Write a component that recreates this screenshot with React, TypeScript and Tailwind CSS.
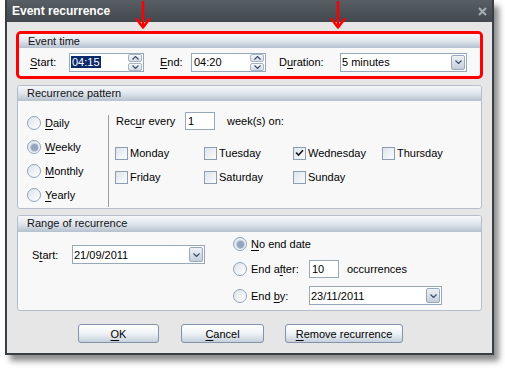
import React from "react"

function U({ children }: { children: React.ReactNode }) {
  return <span className="underline decoration-1 underline-offset-[2px]">{children}</span>
}

function Chevron({ up = false }: { up?: boolean }) {
  return (
    <svg width="7" height="4" viewBox="0 0 7 4" className="block">
      <path d={up ? "M0.5 3.5 L3.5 0.5 L6.5 3.5" : "M0.5 0.5 L3.5 3.5 L6.5 0.5"} fill="none" stroke="#3d4f6e" strokeWidth="1.2" />
    </svg>
  )
}

function SpinBox({ value, selected = false }: { value: string; selected?: boolean }) {
  return (
    <div className="flex h-[19px] w-[75px] items-center border border-[#97a8bb] bg-white">
      <div className="flex-1 pl-px">
        {selected ? (
          <span className="bg-[#0b2a6b] px-px text-white">{value}</span>
        ) : (
          <span className="pl-px">{value}</span>
        )}
      </div>
      <div className="mr-px flex flex-col gap-px">
        <div className="flex h-[8px] w-[14px] items-center justify-center rounded-[2px] border border-[#a7b4c4] bg-gradient-to-b from-[#f6f8fa] to-[#d3dbe5]">
          <Chevron up />
        </div>
        <div className="flex h-[8px] w-[14px] items-center justify-center rounded-[2px] border border-[#a7b4c4] bg-gradient-to-b from-[#f6f8fa] to-[#d3dbe5]">
          <Chevron />
        </div>
      </div>
    </div>
  )
}

function Combo({ value, className }: { value: string; className: string }) {
  return (
    <div className={`flex h-[19px] items-center border border-[#97a8bb] bg-white pl-px ${className}`}>
      <span className="flex-1">{value}</span>
      <div className="mr-px flex h-[15px] w-[14px] items-center justify-center rounded-[2px] border border-[#98a9bd] bg-gradient-to-b from-[#eef2f6] to-[#c3cedb]">
        <Chevron />
      </div>
    </div>
  )
}

function TextBox({ value }: { value: string }) {
  return (
    <div className="flex h-[18px] w-[30px] items-center border border-[#97a8bb] bg-white pl-[2px]">{value}</div>
  )
}

function Radio({ checked = false, children }: { checked?: boolean; children: React.ReactNode }) {
  return (
    <div className="flex items-center">
      <div className="flex h-[14px] w-[14px] items-center justify-center rounded-full border border-[#8fa2b8] bg-gradient-to-br from-[#dde3ea] to-white">
        {checked && <div className="h-[7px] w-[7px] rounded-full bg-[#94a6bd] ring-1 ring-[#c3cedb]" />}
      </div>
      <div className="ml-[4px]">{children}</div>
    </div>
  )
}

function Check({ checked = false, children }: { checked?: boolean; children: React.ReactNode }) {
  return (
    <div className="flex h-[24px] items-center">
      <div className="flex h-[13px] w-[13px] items-center justify-center border border-[#8c9db2] bg-gradient-to-br from-[#dfe5ec] to-[#fbfcfd]">
        {checked && (
          <svg width="9" height="8" viewBox="0 0 9 8">
            <path d="M1 3.5 L3.5 6 L8 1.2" fill="none" stroke="#1a1a1a" strokeWidth="1.6" />
          </svg>
        )}
      </div>
      <span className="ml-[2px]">{children}</span>
    </div>
  )
}

function Header({ title, h = "h-[15px]" }: { title: string; h?: string }) {
  return (
    <div className={`${h} rounded-t-[2px] bg-gradient-to-b from-[#f5f7fa] via-[#dfe5ec] to-[#b6c1cf] pl-[9px] leading-[15px] text-[#111]`}>
      {title}
    </div>
  )
}

function Button({ width, children }: { width: string; children: React.ReactNode }) {
  return (
    <div className={`flex h-[19px] ${width} items-center justify-center rounded-[3px] border border-[#8193a9] bg-gradient-to-b from-white via-[#eef2f6] to-[#c6d0dc]`}>
      {children}
    </div>
  )
}

export default function App() {
  return (
    <div className="relative h-[371px] w-[505px] overflow-hidden bg-white font-['Liberation_Sans',Arial,sans-serif] text-[11px] leading-[14px] text-black">
      <div className="ml-[5px] flex h-[355px] w-[489px] flex-col border-2 border-t-0 border-[#394045] shadow-[5px_6px_6px_rgba(0,0,0,0.45)]">
        {/* title bar */}
        <div className="flex h-[22px] items-center justify-between bg-gradient-to-b from-[#585f64] to-[#42484d] pl-[5px] pr-[5px]">
          <span className="text-[12px] font-bold text-white">Event recurrence</span>
          <svg width="9" height="9" viewBox="0 0 9 9" className="mt-[1px]">
            <path d="M1 1 L8 8 M8 1 L1 8" stroke="#a4abb1" strokeWidth="2.2" />
          </svg>
        </div>

        <div className="flex flex-1 flex-col bg-[#e6e6e6] px-[10px] pt-[9px]">
          {/* Event time */}
          <div className="-mx-px h-[48px] rounded-[5px] border-[3px] border-[#ff0000] bg-[#f8f8f8]">
            <Header title="Event time" h="h-[14px]" />
            <div className="flex h-[28px] items-center pl-[11px]">
              <span className="w-[39px]"><U>S</U>tart:</span>
              <SpinBox value="04:15" selected />
              <span className="ml-[16px] w-[31px]"><U>E</U>nd:</span>
              <SpinBox value="04:20" />
              <span className="ml-[13px] w-[61px]">D<U>u</U>ration:</span>
              <Combo value="5 minutes" className="w-[127px]" />
            </div>
          </div>

          {/* Recurrence pattern */}
          <div className="mt-[6px] flex h-[124px] flex-col rounded-[3px] border border-[#b3bfcd] bg-[#f8f8f8]">
            <Header title="Recurrence pattern" />
            <div className="flex flex-1">
              <div className="flex w-[90px] flex-col pl-[9px] pt-[10px]">
                {[
                  [<><U>D</U>aily</>, false],
                  [<><U>W</U>eekly</>, true],
                  [<><U>M</U>onthly</>, false],
                  [<><U>Y</U>early</>, false],
                ].map(([label, on], i) => (
                  <div key={i} className="flex h-[24px] items-center">
                    <Radio checked={on as boolean}>{label as React.ReactNode}</Radio>
                  </div>
                ))}
              </div>
              <div className="mb-px mt-[14px] w-px bg-[#9c9c9c]" />
              <div className="flex flex-col pl-[6px] pt-[11px]">
                <div className="flex h-[18px] items-center">
                  <span className="ml-px w-[69px]">Rec<U>u</U>r every</span>
                  <TextBox value="1" />
                  <span className="ml-[12px]">week(s) on:</span>
                </div>
                <div className="mt-[11px] grid grid-cols-[89px_89px_89px_89px]">
                  <Check>Monday</Check>
                  <Check>Tuesday</Check>
                  <Check checked>Wednesday</Check>
                  <Check>Thursday</Check>
                  <Check>Friday</Check>
                  <Check>Saturday</Check>
                  <Check>Sunday</Check>
                </div>
              </div>
            </div>
          </div>

          {/* Range of recurrence */}
          <div className="mt-[6px] flex h-[96px] flex-col rounded-[3px] border border-[#b3bfcd] bg-[#f8f8f8]">
            <Header title="Range of recurrence" h="h-[16px]" />
            <div className="flex">
              <div className="flex items-center self-start pl-[14px] pt-[13px]">
                <span className="w-[40px]">S<U>t</U>art:</span>
                <Combo value="21/09/2011" className="w-[133px]" />
              </div>
              <div className="ml-[28px] flex flex-col pt-[3px]">
                <div className="flex h-[18px] items-center">
                  <Radio checked><U>N</U>o end date</Radio>
                </div>
                <div className="mt-[7px] flex h-[18px] items-center">
                  <Radio><span className="inline-block w-[58px]">End a<U>f</U>ter:</span></Radio>
                  <TextBox value="10" />
                  <span className="ml-[8px]">occurrences</span>
                </div>
                <div className="mt-[8px] flex h-[19px] items-center">
                  <Radio><span className="inline-block w-[58px]">End <U>b</U>y:</span></Radio>
                  <Combo value="23/11/2011" className="w-[133px]" />
                </div>
              </div>
            </div>
          </div>

          {/* buttons */}
          <div className="ml-[61px] mt-[13px] flex">
            <Button width="w-[81px]"><U>O</U>K</Button>
            <div className="ml-[22px]"><Button width="w-[83px]"><U>C</U>ancel</Button></div>
            <div className="ml-[21px]"><Button width="w-[118px]"><U>R</U>emove recurrence</Button></div>
          </div>
        </div>
      </div>

      {/* annotation arrows */}
      <svg className="pointer-events-none absolute left-0 top-0" width="505" height="40" viewBox="0 0 505 40">
        <g fill="none" stroke="#ff0000" strokeWidth="2.5" strokeLinecap="round" strokeLinejoin="round">
          <path d="M143 2 V27 M136.5 19 L143 27.5 L149.5 19" />
          <path d="M338 2 V27 M331.5 19 L338 27.5 L344.5 19" />
        </g>
      </svg>
    </div>
  )
}
